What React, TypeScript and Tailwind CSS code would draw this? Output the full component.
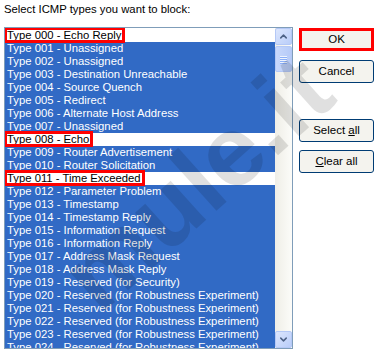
import { ChevronUp, ChevronDown } from "lucide-react";

const icmpTypes = [
	"Echo Reply",
	"Unassigned",
	"Unassigned",
	"Destination Unreachable",
	"Source Quench",
	"Redirect",
	"Alternate Host Address",
	"Unassigned",
	"Echo",
	"Router Advertisement",
	"Router Solicitation",
	"Time Exceeded",
	"Parameter Problem",
	"Timestamp",
	"Timestamp Reply",
	"Information Request",
	"Information Reply",
	"Address Mask Request",
	"Address Mask Reply",
	"Reserved (for Security)",
	"Reserved (for Robustness Experiment)",
	"Reserved (for Robustness Experiment)",
	"Reserved (for Robustness Experiment)",
	"Reserved (for Robustness Experiment)",
	"Reserved (for Robustness Experiment)",
	"Reserved (for Robustness Experiment)",
];

// rows that are NOT blocked (and boxed in red)
const allowed = [0, 8, 11];

const ScrollButton = ({ down }: { down?: boolean }) => (
	<div className="h-[17px] w-[17px] rounded-[2px] border border-[#b4c8f6] bg-linear-to-br from-[#dce6fd] to-[#b9cdf9] flex items-center justify-center">
		{down ? (
			<ChevronDown size={11} strokeWidth={3.2} className="text-[#4d6185]" />
		) : (
			<ChevronUp size={11} strokeWidth={3.2} className="text-[#4d6185]" />
		)}
	</div>
);

const Scrollbar = () => (
	<div className="w-[17px] h-full flex flex-col bg-linear-to-r from-[#efeee7] to-[#fcfcf9]">
		<ScrollButton />
		<div className="mt-[1px] h-[26px] rounded-[2px] border border-[#b4c8f6] bg-linear-to-r from-[#c8d8fc] to-[#b6cbf8] flex flex-col items-center justify-center gap-[1px]">
			{[0, 1, 2, 3].map((i) => (
				<div key={i} className="w-[7px] h-[1px] bg-[#eef4fe] shadow-[0_1px_0_#8cb0f8]" />
			))}
		</div>
		<div className="flex-1" />
		<ScrollButton down />
	</div>
);

const Btn = ({
	children,
	className = "",
}: {
	children: React.ReactNode;
	className?: string;
}) => (
	<button
		className={`h-[23px] w-[75px] bg-[#f4f3ee] text-black text-[11.5px] leading-none ${className}`}
	>
		{children}
	</button>
);

export default function App() {
	return (
		<div className="relative w-[380px] h-[354px] overflow-hidden bg-white text-[11.3px] text-black font-['Liberation_Sans',Arial,sans-serif]">
			<p className="pl-[4px] pt-[3px] h-[27px] leading-[13px]">
				Select ICMP types you want to block:
			</p>
			<div className="flex pl-[4px] gap-[6px]">
				<div className="w-[289px] h-[322px] border border-[#7f9db9] flex">
					<ul className="flex-1 pt-[1px] overflow-hidden">
						{icmpTypes.map((name, i) => {
							const isAllowed = allowed.includes(i);
							return (
								<li
									key={i}
									className={`h-[13px] leading-[13px] pl-[2px] whitespace-nowrap ${
										isAllowed ? "bg-white text-black" : "bg-[#316ac5] text-white"
									}`}
								>
									<span className="relative inline-block">
										Type {String(i).padStart(3, "0")} - {name}
										{isAllowed && (
											<span className="absolute -left-[3px] -right-[4px] -top-[2px] -bottom-[1px] border-[3px] border-[#f00]" />
										)}
									</span>
								</li>
							);
						})}
					</ul>
					<Scrollbar />
				</div>
				<div className="flex flex-col pt-[1px]">
					<Btn className="border-[3px] border-[#f00]">OK</Btn>
					<Btn className="mt-[9px] rounded-[3px] border border-[#003c74]">Cancel</Btn>
					<Btn className="mt-[36px] rounded-[3px] border border-[#003c74]">
						Select <span className="underline">a</span>ll
					</Btn>
					<Btn className="mt-[8px] rounded-[3px] border border-[#003c74]">
						<span className="underline">C</span>lear all
					</Btn>
				</div>
			</div>
			{/* watermark */}
			<span className="pointer-events-none absolute left-[196px] top-[182px] -translate-x-1/2 -translate-y-1/2 -rotate-[42deg] whitespace-nowrap text-[100px] font-bold leading-none text-black/[0.12] font-['Liberation_Sans',Arial,sans-serif]">
				mule.it
			</span>
		</div>
	);
}
